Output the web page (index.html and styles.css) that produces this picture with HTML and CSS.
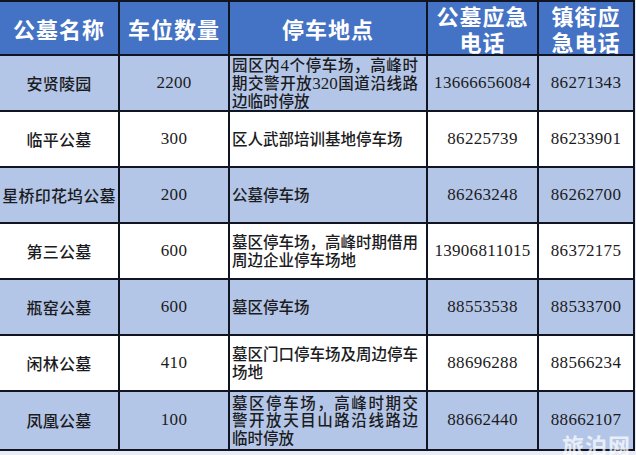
FILE: index.html
```html
<!DOCTYPE html>
<html lang="zh">
<head>
<meta charset="utf-8">
<link rel="stylesheet" href="styles.css">
</head>
<body>
<div class="page">
<table class="grid">
  <colgroup>
    <col class="c1"><col class="c2"><col class="c3"><col class="c4"><col class="c5">
  </colgroup>
  <thead>
    <tr class="head">
      <th>公墓名称</th>
      <th>车位数量</th>
      <th>停车地点</th>
      <th class="two">公墓应急<br>电话</th>
      <th class="two">镇街应<br>急电话</th>
    </tr>
  </thead>
  <tbody>
    <tr class="blue r1">
      <td class="name">安贤陵园</td>
      <td class="num">2200</td>
      <td class="place"><span class="ln j">园区内<span class="d">4</span>个停车场，高峰时</span><span class="ln j">期交警开放<span class="d">320</span>国道沿线路</span><span class="ln">边临时停放</span></td>
      <td class="num">13666656084</td>
      <td class="num">86271343</td>
    </tr>
    <tr class="white">
      <td class="name">临平公墓</td>
      <td class="num">300</td>
      <td class="place"><span class="ln">区人武部培训基地停车场</span></td>
      <td class="num">86225739</td>
      <td class="num">86233901</td>
    </tr>
    <tr class="blue">
      <td class="name">星桥印花坞公墓</td>
      <td class="num">200</td>
      <td class="place"><span class="ln">公墓停车场</span></td>
      <td class="num">86263248</td>
      <td class="num">86262700</td>
    </tr>
    <tr class="white">
      <td class="name">第三公墓</td>
      <td class="num">600</td>
      <td class="place"><span class="ln j">墓区停车场，高峰时期借用</span><span class="ln">周边企业停车场地</span></td>
      <td class="num">13906811015</td>
      <td class="num">86372175</td>
    </tr>
    <tr class="blue">
      <td class="name">瓶窑公墓</td>
      <td class="num">600</td>
      <td class="place"><span class="ln">墓区停车场</span></td>
      <td class="num">88553538</td>
      <td class="num">88533700</td>
    </tr>
    <tr class="white">
      <td class="name">闲林公墓</td>
      <td class="num">410</td>
      <td class="place"><span class="ln j">墓区门口停车场及周边停车</span><span class="ln">场地</span></td>
      <td class="num">88696288</td>
      <td class="num">88566234</td>
    </tr>
    <tr class="blue last">
      <td class="name">凤凰公墓</td>
      <td class="num">100</td>
      <td class="place"><span class="ln j">墓区停车场，高峰时期交</span><span class="ln j">警开放天目山路沿线路边</span><span class="ln">临时停放</span></td>
      <td class="num">88662440</td>
      <td class="num">88662107</td>
    </tr>
  </tbody>
</table>
<div class="mark">旅泊网</div>
</div>
</body>
</html>
```
FILE: styles.css
```css
html, body {
  margin: 0;
  padding: 0;
  background: #eef0f8;
}
.page {
  position: relative;
  width: 636px;
  height: 455px;
  overflow: hidden;
  background: #e9ecf7;
}
.grid {
  border-collapse: collapse;
  table-layout: fixed;
  width: 635px;
  margin-left: -2px;
  font-family: "Noto Sans CJK SC", sans-serif;
  color: #1b1b22;
}
.c1 { width: 120px; }
.c2 { width: 110px; }
.c3 { width: 198px; }
.c4 { width: 111px; }
.c5 { width: 96px; }
.grid th, .grid td {
  border: 2px solid #111522;
  padding: 0;
  text-align: center;
  vertical-align: middle;
  overflow: hidden;
}
.head th {
  height: 51px;
  background: #4472c4;
  color: #ffffff;
  font-weight: 700;
  font-size: 22px;
  line-height: 26px;
  letter-spacing: 1px;
}
.blue td { background: #b4c6e7; }
.white td { background: #ffffff; }
.grid tbody td { height: 54px; }
.grid tbody tr.r1 td { height: 53px; }
.grid tbody tr.last td { height: 57px; }
.name {
  font-size: 16px;
  font-weight: 500;
  letter-spacing: 0.2px;
}
.num {
  font-family: "Liberation Serif", serif;
  font-size: 17px;
  letter-spacing: 0.3px;
}
.grid td.place {
  text-align: left;
  padding: 0 8px 0 2px;
  font-size: 15.5px;
  line-height: 17.5px;
  font-weight: 500;
}
.ln {
  display: block;
  white-space: nowrap;
}
.ln.j {
  text-align: justify;
  text-align-last: justify;
}
.d {
  font-family: "Liberation Serif", serif;
  font-size: 17px;
  line-height: 17px;
}
.mark {
  position: absolute;
  right: 5px;
  bottom: -5px;
  font-family: "Noto Sans CJK SC", sans-serif;
  font-size: 22px;
  font-weight: 700;
  color: rgba(255, 255, 255, 0.72);
  letter-spacing: 1px;
}
```
